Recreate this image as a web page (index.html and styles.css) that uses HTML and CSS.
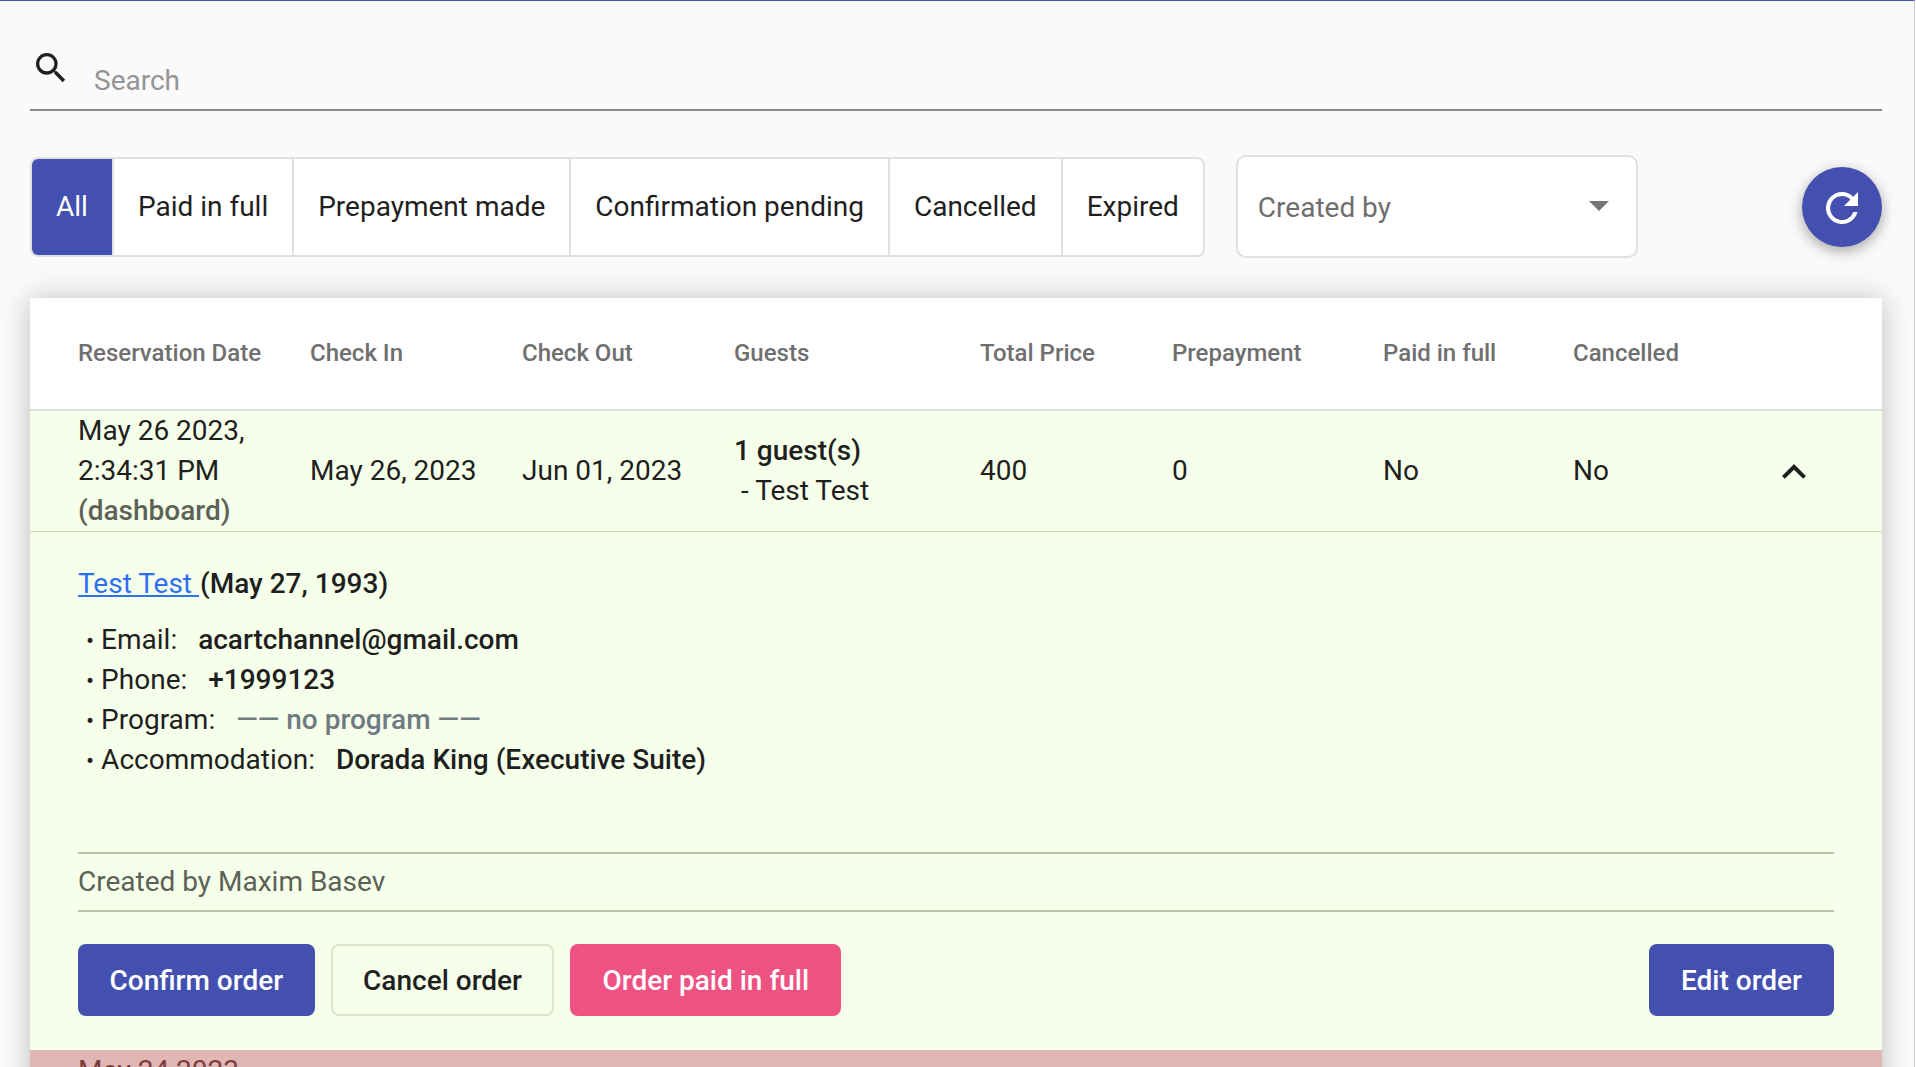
FILE: index.html
```html
<!DOCTYPE html>
<html lang="en">
<head>
<meta charset="utf-8">
<title>Orders</title>
<link rel="stylesheet" href="styles.css">
</head>
<body>
<main class="page">
  <div class="search">
    <svg class="search-icon" viewBox="0 0 24 24"><path d="M15.5 14h-.79l-.28-.27A6.471 6.471 0 0 0 16 9.5 6.5 6.5 0 1 0 9.5 16c1.61 0 3.09-.59 4.23-1.57l.27.28v.79l5 4.99L20.49 19l-4.99-5zm-6 0C7.01 14 5 11.99 5 9.5S7.01 5 9.5 5 14 7.01 14 9.5 11.99 14 9.5 14z"/></svg>
    <span class="search-text">Search</span>
  </div>
  <div class="toolbar">
    <div class="filters">
      <button class="filter active">All</button>
      <button class="filter">Paid in full</button>
      <button class="filter">Prepayment made</button>
      <button class="filter">Confirmation pending</button>
      <button class="filter">Cancelled</button>
      <button class="filter">Expired</button>
    </div>
    <div class="select">
      <span>Created by</span>
      <i class="caret"></i>
    </div>
    <button class="fab" aria-label="Refresh">
      <svg viewBox="0 0 24 24"><path d="M17.65 6.35A7.95 7.95 0 0 0 12 4a8 8 0 1 0 7.75 10h-2.08A6 6 0 1 1 12 6c1.66 0 3.14.69 4.22 1.78L13 11h7V4l-2.35 2.35z"/></svg>
    </button>
  </div>
  <section class="card">
    <div class="row head">
      <div>Reservation Date</div><div>Check In</div><div>Check Out</div><div>Guests</div><div>Total Price</div><div>Prepayment</div><div>Paid in full</div><div>Cancelled</div>
    </div>
    <div class="row order">
      <div>May 26 2023,<br>2:34:31 PM<br><b class="muted">(dashboard)</b></div>
      <div>May 26, 2023</div>
      <div>Jun 01, 2023</div>
      <div class="guests"><b>1 guest(s)</b><br><span class="guest">- Test Test</span></div>
      <div>400</div>
      <div>0</div>
      <div>No</div>
      <div>No</div>
      <svg class="chevron" viewBox="0 0 24 24"><path d="M7.41 15.41 12 10.83l4.59 4.58L18 14l-6-6-6 6z"/></svg>
    </div>
    <div class="details">
      <p class="name"><a href="#">Test Test </a><b>(May 27, 1993)</b></p>
      <ul class="info">
        <li>Email: <b>acartchannel@gmail.com</b></li>
        <li>Phone: <b>+1999123</b></li>
        <li>Program: <b class="none">—— no program ——</b></li>
        <li>Accommodation: <b>Dorada King (Executive Suite)</b></li>
      </ul>
      <div class="creator">Created by Maxim Basev</div>
      <div class="actions">
        <button class="btn primary">Confirm order</button>
        <button class="btn outline">Cancel order</button>
        <button class="btn pink">Order paid in full</button>
        <button class="btn primary edit">Edit order</button>
      </div>
    </div>
    <div class="row next">
      <div>May 24 2023,</div>
    </div>
  </section>
</main>
</body>
</html>
```
FILE: styles.css
```css
html { background: #fff; }
html, body { margin: 0; height: 1067px; overflow: hidden; }
body { width: 1915px; background: #fafafa; font-family: Roboto, sans-serif; font-size: 28px; color: #1f1f1f; border-top: 1px solid #4350af; border-right: 1px solid #d2d2d2; box-sizing: border-box; }
.page { padding: 0 32px 0 30px; }
b { font-weight: 500; }

.search { height: 108px; box-sizing: content-box; border-bottom: 2px solid #8a8a8a; display: flex; }
.search-icon { width: 40px; height: 40px; margin-top: 47px; margin-left: 1px; fill: #1f1f1f; }
.search-text { margin: 64px 0 0 23px; color: #949494; line-height: 32px; }

.toolbar { display: flex; align-items: center; margin-top: 44px; height: 103px; }
.filters { display: flex; height: 100px; box-sizing: border-box; border: 2px solid #e0e0e0; border-radius: 8px; background: #fff; overflow: hidden; }
.filter { font: inherit; color: #1f1f1f; background: none; border: 0; border-left: 2px solid #e0e0e0; padding: 0 24px; }
.filter:first-child { border-left: 0; }
.filter.active { background: #4350af; color: #fff; }
.select { width: 402px; height: 103px; box-sizing: border-box; margin-left: 31px; border: 2px solid #e0e0e0; border-radius: 10px; background: #fff; display: flex; align-items: center; justify-content: space-between; padding: 1px 27px 0 20px; color: #6e6e6e; }
.caret { border: 10px solid transparent; border-top-color: #757575; border-bottom: 0; margin-top: -3px; }
.fab { margin-left: auto; width: 80px; height: 80px; border: 0; padding: 0; border-radius: 50%; background: #4350af; box-shadow: 0 4px 14px rgba(0,0,0,.35); display: flex; align-items: center; justify-content: center; }
.fab svg { width: 48px; height: 48px; fill: #fff; margin-top: 2px; }

.card { margin-top: 40px; background: #fff; box-shadow: 0 2px 28px rgba(0,0,0,.25); }
.row { display: grid; grid-template-columns: 232px 212px 212px 246px 192px 211px 190px 1fr; padding-left: 48px; align-items: center; position: relative; }
.head { height: 113px; color: #6f6f6f; font-size: 24px; font-weight: 500; box-sizing: border-box; border-bottom: 2px solid #dedede; padding-bottom: 1px; }
.order { background: #f6ffe9; line-height: 40px; height: 121px; box-sizing: border-box; border-bottom: 1px solid #cddbb0; white-space: nowrap; }
.muted { color: #5c6258; }
.guests { line-height: 40px; }
.guest { padding-left: 7px; }
.chevron { position: absolute; right: 64px; top: 37px; width: 48px; height: 48px; fill: #1f1f1f; }

.details { background: #f6ffe9; padding: 32px 48px 33px; border-bottom: 1px solid #fff; }
.name { margin: 0; line-height: 40px; }
.name a { color: #2f6ff5; margin-right: 1px; }
.info { list-style: none; margin: 16px 0 0; padding: 0 0 0 8px; line-height: 40px; }
.info li::before { content: "•"; font-size: 24px; line-height: 1; margin-right: 7px; }
.info b { margin-left: 14px; }
.info .none { color: #6f7a83; }
.creator { margin-top: 72px; height: 60px; line-height: 56px; box-sizing: border-box; border-top: 2px solid #bcc2a9; border-bottom: 2px solid #bcc2a9; color: #5c6258; }
.actions { display: flex; gap: 16px; margin-top: 32px; }
.btn { font: inherit; font-weight: 500; height: 72px; padding: 0 32px; border-radius: 8px; border: 0; color: #fff; }
.primary { background: #4350af; }
.primary:first-child { padding: 0 31.5px; }
.pink { background: #ee5282; }
.outline { background: transparent; color: #1f1f1f; border: 2px solid #dfe3cb; padding: 0 30.5px; }
.edit { margin-left: auto; }
.next { background: #e1b7b5; color: #7d3d3d; line-height: 40px; padding-top: 1px; }
```
